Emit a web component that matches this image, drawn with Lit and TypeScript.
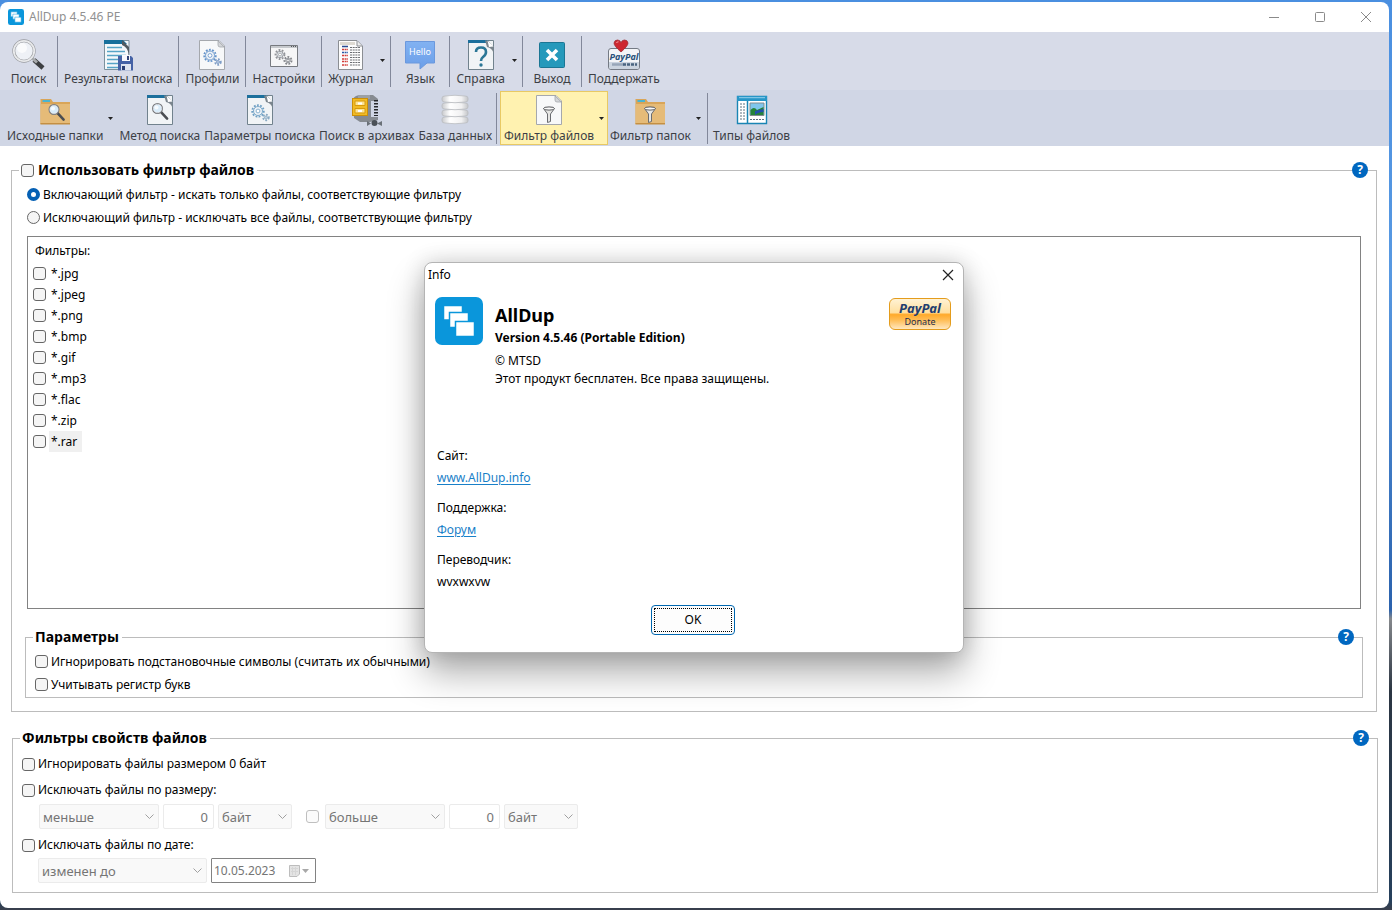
import { LitElement, html, css, svg, nothing } from "lit";
import { customElement } from "lit/decorators.js";
import { classMap } from "lit/directives/class-map.js";

const gear = (cx: number, cy: number, r: number, color: string) => svg`
  <circle cx=${cx} cy=${cy} r=${r} fill="none" stroke=${color} stroke-width="1.800" stroke-dasharray="1.800 1.400"/>
  <circle cx=${cx} cy=${cy} r=${r - 1.3} fill="#edf2f7" stroke=${color} stroke-width=".9"/>
  <circle cx=${cx} cy=${cy} r=${r / 3} fill="#fff" stroke=${color} stroke-width=".8"/>`;

const lens = (cx: number, cy: number, r: number) => svg`
  <path d="M${cx + r * 0.7} ${cy + r * 0.7}L${cx + r * 2} ${cy + r * 2.1}" stroke="#4a4d52" stroke-width="2.600" stroke-linecap="round"/>
  <circle cx=${cx} cy=${cy} r=${r} fill="#d8ecfa" stroke="#77797d" stroke-width="1.400"/>
  <circle cx=${cx} cy=${cy} r=${r - 0.6} fill="none" stroke="#f2f4f6" stroke-width=".6"/>
  <circle cx=${cx - 1} cy=${cy - 1} r=${r / 2.4} fill="#fff" opacity=".8"/>`;

const funnel = svg`
  <path d="M10.500 14.500Q16 12.500 21.500 14.500L17.500 20V27.500L14.500 28.500V20Z" fill="#e6e6e4" stroke="#6a6c70"/>
  <ellipse cx="16" cy="14.500" rx="5.500" ry="1.600" fill="#fafafa" stroke="#5d5f63"/>`;

const sheet = svg`
  <path d="M3.500 1.500H23L28.500 7V30.500H3.500Z" fill="#f7f8f9" stroke="#a5a8ad"/>
  <path d="M22 2L28 8H24Q22 8 22 6Z" fill="#d4d6d9" stroke="#a5a8ad" stroke-width=".8"/>`;

const blueSheet = svg`
  <path d="M3.500 1.500H28.500V30.500H3.500Z" fill="#f1f4f6" stroke="#71828d"/>
  <path d="M3 1H23L24 4H3Z" fill="#1b6f9c"/>
  <path d="M20 1.500H23L28.500 8V14Q27 9 22 8Z" fill="#7b858d"/>
  <path d="M22.500 1.500L28.500 7.500L24 8Z" fill="#fff"/>`;

const folder = svg`
  <path d="M1.500 5H12L14 8H31V30H1.500Z" fill="#d9a558"/>
  <path d="M1.500 10H31V30H1.500Z" fill="#e5bb78"/>
  <path d="M1.500 29H31V30.500H1.500Z" fill="#c48f43"/>
  <path d="M3.500 7H11" stroke="#4ab4cf" stroke-width="2"/>`;

const icons: Record<string, unknown> = {
  search: svg`
    <path d="M22 21L31 29" stroke="#3d3f42" stroke-width="4.500"/>
    <path d="M20 19L25 23.500" stroke="#a9abad" stroke-width="3"/>
    <circle cx="12" cy="12" r="10.200" fill="#eef1f6" stroke="#999b9f" stroke-width="3"/>
    <circle cx="12" cy="12" r="10.200" fill="none" stroke="#e8e9eb" stroke-width="1.800"/>
    <circle cx="10" cy="9" r="5" fill="#fff" opacity=".7"/>`,
  results: svg`
    <path d="M2.500 1.500H27V30.500H2.500Z" fill="#f4f8fa" stroke="#7c919d"/>
    <path d="M2 1H21L25 5H2Z" fill="#176f9b"/>
    <path d="M20 1L27 8V17Q26 8 20 6Z" fill="#515b61"/>
    <path d="M5 8.500H20M5 12.500H23M5 16.500H24M5 20.500H16M5 24.500H16M5 28.500H16" stroke="#55a4c6" stroke-width="1.300"/>
    <path d="M16 17H29L31 19V31.500H16Z" fill="#4562a5"/>
    <path d="M20 16H28V22H20Z" fill="#f8f9fc"/><path d="M25 17H27V21H25Z" fill="#304577"/>
    <path d="M19 25H29V31.500H19Z" fill="#dfe4ee"/><path d="M20 27H23V31H20Z" fill="#2b3f74"/>`,
  profiles: svg`${sheet}${gear(14, 16.5, 5.8, "#6493ca")}${gear(22, 23, 2.8, "#7f9dc6")}`,
  settings: svg`
    <path d="M2.500 6.500H29.500V27.500H2.500Z" fill="#f6f6f7" stroke="#777a80"/>
    <path d="M3 7H29V9H3Z" fill="#c6c9cd"/><path d="M23 7.500H28" stroke="#55585c" stroke-dasharray="1 1"/>
    ${gear(12, 15.5, 4.5, "#919398")}${gear(20, 21.5, 3.6, "#85878c")}`,
  log: svg`
    <path d="M3.500 1.500H22L27.500 7V30.500H3.500Z" fill="#fdfdfd" stroke="#8b8e93"/>
    <path d="M5 3H20V6H5Z" fill="#dedad2"/><path d="M22 2V7H27" fill="#eee" stroke="#8b8e93"/>
    <path d="M7 7.500H13" stroke="#294a91" stroke-width="1.500"/>
    <path d="M7 10.500H13M7 16.500H13M7 20H13M7 22.500H13M7 26H13" stroke="#d33e39" stroke-width="1.600" stroke-dasharray="2 .6"/>
    <path d="M7 13.500H13" stroke="#2a58a5" stroke-width="1.600" stroke-dasharray="2 .6"/>
    <path d="M15 8.500H25M15 11H25M15 13.500H25M15 16H25M15 18.500H25M15 21H25M15 23.500H25M15 26H25" stroke="#6c6e72" stroke-dasharray="2 .7"/>`,
  language: svg`
    <defs><linearGradient id="bubble" x2="0" y2="1"><stop stop-color="#82b2f2"/><stop offset="1" stop-color="#6b9ee8"/></linearGradient></defs>
    <path d="M1.500 2.500H30.500V24H23L16 30V24H1.500Z" fill="url(#bubble)" stroke="#6b98dd"/>
    <text class="hello" x="16" y="16" text-anchor="middle">Hello</text>`,
  help: svg`${blueSheet}
    <path d="M11 13Q11 8.500 16 8.500Q21 8.500 21 13Q21 16 18 18Q16 19.500 16 22" fill="none" stroke="#2b7796" stroke-width="2.600"/>
    <circle cx="16" cy="26" r="1.700" fill="#2b7796"/>`,
  exit: svg`
    <rect x="3.500" y="3.500" width="25" height="25" rx="1" fill="#2599bb" stroke="#1b7694"/>
    <path d="M11 11L21 21M21 11L11 21" stroke="#fff" stroke-width="3.600"/>`,
  donate: svg`
    <rect x="0.500" y="9.500" width="31" height="21" rx="2.500" fill="#f3f5f8" stroke="#747a84"/>
    <path d="M1 23H31V28Q31 30 29 30H3Q1 30 1 28Z" fill="#cbd4df"/>
    <path d="M4 25.500H16" stroke="#97a6b8" stroke-width="2.500"/>
    <path d="M15 25.500H29" stroke="#4a6480" stroke-width="2.500" stroke-dasharray="3 1"/>
    <text class="paypal" x="16" y="21" text-anchor="middle">PayPal</text>
    <path d="M13 13Q6 7 6 4Q6.500 1 9.500 1Q12 1 13 3.500Q14 1 16.500 1Q19.500 1 20 4Q20 7 13 13Z" fill="#cd2730" stroke="#9e2c34" stroke-width=".8"/>
    <path d="M8.500 4Q9 2.500 10.500 2.800" stroke="#f3a0a0" fill="none"/>`,
  folderSearch: svg`${folder}${lens(15, 15.5, 4.8)}`,
  method: svg`${blueSheet}${lens(13.5, 14.5, 4.8)}`,
  params: svg`${blueSheet}${gear(14, 17, 5.8, "#6fa0c4")}${gear(22, 23.5, 2.8, "#8aaac3")}`,
  archives: svg`
    <path d="M2 5Q4 1 10 1H22L27 5V7H20V23H27V26L19 28H9L3 24Z" fill="#868b91"/>
    <path d="M7 1H19V5H7Z" fill="#9ca1a6"/>
    <rect x="1.500" y="4.500" width="15" height="17" fill="#f1bb25" stroke="#cb9009"/>
    <path d="M4 7H14V11.500H4ZM4 14.500H14V19H4Z" fill="#fce495" stroke="#d79a0e"/>
    <path d="M7 9.500H11M7 17H11" stroke="#fff" stroke-width="2"/>
    <path d="M25 6V22" stroke="#26282b" stroke-width="4" stroke-dasharray="1.500 1.500"/>
    <path d="M16 27L20 29.500L16 32ZM31 27L26 29.500L31 32Z" fill="#6a7178"/><circle cx="23.500" cy="29" r="3" fill="#4a5057"/>`,
  database: svg`
    <defs><linearGradient id="disk"><stop stop-color="#c9cacd"/><stop offset=".3" stop-color="#fff"/><stop offset=".75" stop-color="#f1f1f2"/><stop offset="1" stop-color="#c4c6c9"/></linearGradient></defs>
    ${[24, 17, 10, 3].map((y) => svg`<path d="M3 ${y + 1}Q3 ${y - 1} 6 ${y - 1}Q16 ${y - 2.5} 26 ${y - 1}Q29 ${y - 1} 29 ${y + 1}V${y + 3}Q29 ${y + 5} 26 ${y + 5}Q16 ${y + 6.5} 6 ${y + 5}Q3 ${y + 5} 3 ${y + 3}Z" fill="url(#disk)" stroke="#b9bbbf" stroke-width=".8"/>`)}`,
  fileFilter: svg`${sheet}${funnel}`,
  folderFilter: svg`${folder}${funnel}`,
  types: svg`
    <path d="M1.500 2.500H30.500V29.500H1.500Z" fill="#fff" stroke="#1985b4" stroke-width="1.400"/>
    <path d="M1 2H31V7H1Z" fill="#2796c7"/><path d="M3 3.700H29" stroke="#93d1ec"/>
    <path d="M11.500 7V29" stroke="#1985b4" stroke-width="1.500"/>
    <path d="M4 10H9M4 13H9M4 16H9M4 19H9M4 22H9M4 25H9M14 25.500H28" stroke="#5c7080" stroke-dasharray="2 1"/>
    <path d="M14 9H28V21.500H14Z" fill="#7fc6ec" stroke="#818b90"/>
    <path d="M14.500 16Q18 12 21 16L27.500 13V21H14.500Z" fill="#24833a"/><path d="M19 17L27.500 15V18Q22 18 19 21Z" fill="#224fae"/>`,
};

interface Tool {
  icon: string;
  label: string;
  menu?: boolean;
  line?: boolean;
  active?: boolean;
}

const mainTools: Tool[] = [
  { icon: "search", label: "Поиск", line: true },
  { icon: "results", label: "Результаты поиска", line: true },
  { icon: "profiles", label: "Профили", line: true },
  { icon: "settings", label: "Настройки", line: true },
  { icon: "log", label: "Журнал", menu: true, line: true },
  { icon: "language", label: "Язык", line: true },
  { icon: "help", label: "Справка", menu: true, line: true },
  { icon: "exit", label: "Выход", line: true },
  { icon: "donate", label: "Поддержать" },
];

const pageTools: Tool[] = [
  { icon: "folderSearch", label: "Исходные папки", menu: true },
  { icon: "method", label: "Метод поиска" },
  { icon: "params", label: "Параметры поиска" },
  { icon: "archives", label: "Поиск в архивах" },
  { icon: "database", label: "База данных", line: true },
  { icon: "fileFilter", label: "Фильтр файлов", menu: true, active: true },
  { icon: "folderFilter", label: "Фильтр папок", menu: true, line: true },
  { icon: "types", label: "Типы файлов" },
];

const patterns = ["*.jpg", "*.jpeg", "*.png", "*.bmp", "*.gif", "*.mp3", "*.flac", "*.zip", "*.rar"];

const logo = html`<svg class="logo" viewBox="0 0 48 48" aria-hidden="true">
  <rect width="48" height="48" rx="7" fill="#0a96db"/>
  <g fill="#fff" stroke="#0a96db" stroke-width="1.500">
    <path d="M8.500 8.500H27.500V23H8.500Z"/><path d="M14.500 15.500H33.500V30.500H14.500Z"/><path d="M20.500 24.500H39.500V39.500H20.500Z"/>
  </g></svg>`;

@customElement("app-root")
export class AppRoot extends LitElement {
  static styles = css`
    :host {
      display: block;
      box-sizing: border-box;
      height: 100vh;
      padding: 2px 3px 2px 0;
      font: 12px/16px "Noto Sans", "Open Sans", sans-serif;
      color: #000;
      background: linear-gradient(#4a8fe0, #5899e2 30%, #2b62ad 67%, #85888c 68%, #2b3542 76%, #26405c 99%, #3a3f4c);
      overflow: hidden;
    }
    * { box-sizing: border-box; }
    button, input, select { font: inherit; color: inherit; }
    button { border: 0; padding: 0; background: none; }
    .window {
      position: relative;
      display: flex;
      flex-direction: column;
      height: 100%;
      background: #fff;
      border-radius: 8px;
      overflow: hidden;
    }
    .titlebar { display: flex; align-items: center; height: 30px; padding-left: 8px; color: #919191; }
    .titlebar .logo { width: 16px; height: 16px; margin-right: 5px; }
    .title { flex: 1; margin: 0; font-size: 12px; font-weight: 400; }
    .caption { width: 46px; height: 28px; display: grid; place-items: center; }
    .caption svg { width: 12px; height: 12px; fill: none; stroke: #8a8a8a; }
    .toolbar { display: flex; color: #3c3f45; }
    .toolbar.main { height: 58px; padding-top: 3px; background: #d7dbe8; }
    .toolbar.pages { height: 56px; padding: 1px 0 0 5px; background: #d0d6e5; }
    .tool { display: flex; align-items: center; justify-content: center; height: 54px; padding: 0 2px; border: 1px solid transparent; border-width: 1px 0; }
    .main .tool { min-width: 58px; padding: 0 6px; }
    .tool.menu { padding-right: 4px; }
    .main .tool.menu { padding-right: 5px; }
    .main .tool:first-child { min-width: 57px; }
    .tool.active { padding: 0 3px; background: #fff2b0; border: 1px solid #e8c964; }
    .tool .face { display: flex; flex-direction: column; align-items: center; padding-top: 2px; white-space: nowrap; }
    .tool .icon { width: 32px; height: 32px; margin-bottom: 2px; fill: none; overflow: visible; }
    .main .tool .icon { margin-bottom: 0; }
    .arrow { width: 5px; height: 3px; margin-left: 5px; fill: #222; }
    .main .arrow { margin: 0 0 4px 7px; }
    .line { width: 1px; height: 51px; margin-top: 1px; background: #82889a; }
    .pages .line { margin: 2px 3px 0 2px; }
    .hello { font: 9px "Noto Sans", sans-serif; fill: #fff; }
    .paypal { font: italic bold 9px "Noto Sans", sans-serif; fill: #29517a; }
    .page { display: flex; flex-direction: column; flex: 1; min-height: 0; padding: 14px 12px 15px 11px; }
    fieldset { position: relative; display: flex; flex-direction: column; min-width: 0; margin: 0; border: 1px solid #bcbcbc; padding: 0; }
    legend { display: flex; align-items: center; height: 20px; margin-left: 8px; padding: 0 3px 0 2px; font-size: 14px; font-weight: 700; line-height: 20px; }
    .filter { flex: 1; padding: 3px 15px 13px 15px; }
    .filter > legend { margin-left: -8px; }
    .params { margin: 18px -2px 0; padding: 3px 9px 1px; }
    .params > legend { margin-left: -2px; }
    .properties { margin: 16px -1px 0 1px; padding: 4px 10px 9px; }
    .properties > legend { margin-left: -3px; }
    .check { display: flex; align-items: center; gap: 4px; height: 23px; white-space: nowrap; }
    .params .check { gap: 3px; }
    .filter > .check { gap: 3px; }
    .properties > .check { height: 24px; margin-bottom: 2px; margin-left: -1px; gap: 3px; }
    .check input, legend input {
      appearance: none; flex: none; width: 13px; height: 13px; margin: 0;
      border: 1px solid #666; border-radius: 3px; background: #f5f5f5;
    }
    legend .check { height: 20px; }
    .check input[type="radio"] { border-radius: 50%; }
    .check input[type="radio"]:checked { border: 4px solid #0560b4; background: #fff; }
    .check input:disabled { border-color: #bfbfbf; background: #fbfbfb; }
    .help { position: absolute; top: -18px; right: 8px; width: 16px; height: 16px; border-radius: 50%; background: #0067c0; color: #fff; font-size: 12px; font-weight: 700; line-height: 16px; text-align: center; }
    .list { flex: 1; min-height: 0; margin-top: 7px; padding: 5px; border: 1px solid #828282; }
    .list h2 { margin: 0 0 3px 2px; font-size: 12px; font-weight: 400; line-height: 18px; }
    .list ul { margin: 0; padding: 0; list-style: none; }
    .list .check { height: 21px; gap: 3px; }
    .list .name { padding: 0 5px 0 2px; line-height: 21px; }
    .list .name.current { background: #f0f0f0; }
    .controls { display: flex; align-items: center; gap: 4px; height: 25px; margin: 0 0 4px 16px; color: #757575; }
    .controls.last { margin: -1px 0 0 15px; }
    .select { display: grid; align-items: center; width: 120px; height: 25px; }
    .select.unit { width: 74px; }
    .select.date { width: 169px; }
    .select > * { grid-area: 1 / 1; }
    .select select { appearance: none; width: 100%; height: 25px; padding: 0 3px; border: 1px solid #ebebeb; border-radius: 2px; background: #f9f9f9; opacity: 1; font-size: 12px; }
    .chevron { justify-self: end; width: 9px; height: 5px; margin-right: 5px; fill: none; stroke: #a0a0a0; }
    .number { width: 51px; height: 25px; padding: 0 5px 0 0; border: 1px solid #ebebeb; border-radius: 2px; background: #fff; text-align: right; font-size: 12px; }
    .select select, .number { font-size: 13px; }
    .controls .check { margin: 0 2px 0 10px; }
    .picker { display: flex; align-items: center; width: 105px; height: 25px; border: 1px solid #828282; border-radius: 1px; padding-right: 5px; }
    .picker input { width: 76px; height: 21px; padding: 0 0 0 2px; border: 0; background: none; font-size: 12px; }
    .picker svg { width: 22px; height: 14px; }
    .overlay { position: absolute; inset: 0; display: flex; align-items: center; justify-content: center; padding: 5px 1px 0 0; }
    .dialog {
      position: static; display: flex; flex-direction: column; width: 540px; margin: 0; padding: 0 12px 17px 10px; color: #000;
      border: 1px solid #b4b4b4; border-radius: 8px; background: #fff;
      box-shadow: 0 20px 36px rgba(0, 0, 0, .32), 0 0 22px rgba(0, 0, 0, .16);
    }
    .dialog header { display: flex; align-items: center; height: 24px; margin: 0 -9px 10px -7px; }
    .dialog header h2 { flex: 1; margin: 0; font-size: 12px; font-weight: 400; }
    .close { width: 24px; height: 24px; }
    .close svg { display: block; width: 12px; height: 12px; margin: auto; fill: none; stroke: #222; }
    .about { display: flex; align-items: flex-start; gap: 12px; height: 148px; }
    .about .logo { width: 48px; height: 48px; }
    .product { flex: 1; padding-top: 6px; }
    .product h1 { margin: 0; font-size: 18px; line-height: 24px; }
    .product p { margin: 0; line-height: 18px; }
    .product .version { line-height: 22px; margin-bottom: 3px; font-weight: 700; }
    .paypal-button { display: flex; flex-direction: column; align-items: center; width: 62px; height: 32px; margin-top: 1px; border: 1px solid #e49c1c; border-radius: 6px; background: linear-gradient(#fff2d4, #ffe0a0 45%, #ffaa2b 52%, #ffbd55 70%, #ffe7c0); color: #1d2c4c; }
    .paypal-button b { font-size: 13px; font-style: italic; line-height: 18px; color: #1f3e70; }
    .paypal-button span { font-size: 9px; line-height: 9px; }
    .contacts { margin: 0 0 0 2px; line-height: 22px; }
    .contacts dd { margin: 0 0 8px; }
    .contacts a { color: #1980c8; text-decoration: underline; text-underline-offset: 2px; }
    .ok { align-self: center; width: 84px; height: 30px; padding: 2px; margin-top: 4px; border: 1px solid #0067b0; border-radius: 4px; background: #fdfdfd; }
    .ok span { display: grid; place-items: center; height: 100%; border: 1px dotted #000; }
  `;

  private tool(t: Tool) {
    return html`<button class=${classMap({ tool: true, menu: !!t.menu, active: !!t.active })}>
        <span class="face"><svg class="icon" viewBox="0 0 32 32" aria-hidden="true">${icons[t.icon]}</svg>${t.label}</span>
        ${t.menu ? html`<svg class="arrow" viewBox="0 0 5 3"><path d="M0 0H5L2.500 3Z"/></svg>` : nothing}
      </button>
      ${t.line ? html`<span class="line"></span>` : nothing}`;
  }

  private help() {
    return html`<button class="help" aria-label="Справка">?</button>`;
  }

  private check(label: string) {
    return html`<label class="check"><input type="checkbox">${label}</label>`;
  }

  private select(value: string, label: string, kind = "") {
    return html`<span class="select ${kind}">
      <select disabled aria-label=${label}><option>${value}</option></select>
      <svg class="chevron" viewBox="0 0 9 5"><path d="M.5 .5L4.500 4.500L8.500 .5"/></svg>
    </span>`;
  }

  render() {
    return html`<div class="window">
      <header class="titlebar">
        ${logo}
        <h1 class="title">AllDup 4.5.46 PE</h1>
        <button class="caption" aria-label="Свернуть"><svg viewBox="0 0 12 12"><path d="M1 6.500H11"/></svg></button>
        <button class="caption" aria-label="Развернуть"><svg viewBox="0 0 12 12"><rect x="1.500" y="1.500" width="9" height="9" rx="1"/></svg></button>
        <button class="caption" aria-label="Закрыть"><svg viewBox="0 0 12 12"><path d="M1 1L11 11M11 1L1 11"/></svg></button>
      </header>
      <nav class="toolbar main">${mainTools.map((t) => this.tool(t))}</nav>
      <nav class="toolbar pages">${pageTools.map((t) => this.tool(t))}</nav>
      <main class="page">
        <fieldset class="filter">
          <legend>${this.check("Использовать фильтр файлов")}</legend>
          ${this.help()}
          <label class="check"><input type="radio" name="mode" checked>Включающий фильтр - искать только файлы, соответствующие фильтру</label>
          <label class="check"><input type="radio" name="mode">Исключающий фильтр - исключать все файлы, соответствующие фильтру</label>
          <section class="list">
            <h2>Фильтры:</h2>
            <ul>
              ${patterns.map((p, i) => html`<li><label class="check"><input type="checkbox"><span class=${classMap({ name: true, current: i === patterns.length - 1 })}>${p}</span></label></li>`)}
            </ul>
          </section>
          <fieldset class="params">
            <legend>Параметры</legend>
            ${this.help()}
            ${this.check("Игнорировать подстановочные символы (считать их обычными)")}
            ${this.check("Учитывать регистр букв")}
          </fieldset>
        </fieldset>
        <fieldset class="properties">
          <legend>Фильтры свойств файлов</legend>
          ${this.help()}
          ${this.check("Игнорировать файлы размером 0 байт")}
          ${this.check("Исключать файлы по размеру:")}
          <div class="controls">
            ${this.select("меньше", "Сравнение")}
            <input class="number" disabled value="0" aria-label="Размер">
            ${this.select("байт", "Единица", "unit")}
            <label class="check"><input type="checkbox" disabled aria-label="Второе условие"></label>
            ${this.select("больше", "Сравнение")}
            <input class="number" disabled value="0" aria-label="Размер">
            ${this.select("байт", "Единица", "unit")}
          </div>
          ${this.check("Исключать файлы по дате:")}
          <div class="controls last">
            ${this.select("изменен до", "Условие даты", "date")}
            <span class="picker">
              <input disabled value="10.05.2023" aria-label="Дата">
              <svg viewBox="0 0 22 14"><path d="M1.500 1.500H11.500V10L9 12.500H1.500Z" fill="#e4e4e4" stroke="#bdbdbd"/><path d="M3 4.500H10M3 7.500H10M4.500 3V11M7.500 3V11" stroke="#d6d6d6"/><path d="M14 5H21L17.500 9Z" fill="#a8a8a8"/></svg>
            </span>
          </div>
        </fieldset>
      </main>
      <div class="overlay">
        <dialog class="dialog" open aria-label="Info">
          <header>
            <h2>Info</h2>
            <button class="close" aria-label="Закрыть"><svg viewBox="0 0 12 12"><path d="M1 1L11 11M11 1L1 11" stroke-width="1.200"/></svg></button>
          </header>
          <div class="about">
            ${logo}
            <div class="product">
              <h1>AllDup</h1>
              <p class="version">Version 4.5.46 (Portable Edition)</p>
              <p>© MTSD</p>
              <p>Этот продукт бесплатен. Все права защищены.</p>
            </div>
            <button class="paypal-button"><b>PayPal</b><span>Donate</span></button>
          </div>
          <dl class="contacts">
            <dt>Сайт:</dt><dd><a href="#site">www.AllDup.info</a></dd>
            <dt>Поддержка:</dt><dd><a href="#forum">Форум</a></dd>
            <dt>Переводчик:</dt><dd>wvxwxvw</dd>
          </dl>
          <button class="ok"><span>OK</span></button>
        </dialog>
      </div>
    </div>`;
  }
}
